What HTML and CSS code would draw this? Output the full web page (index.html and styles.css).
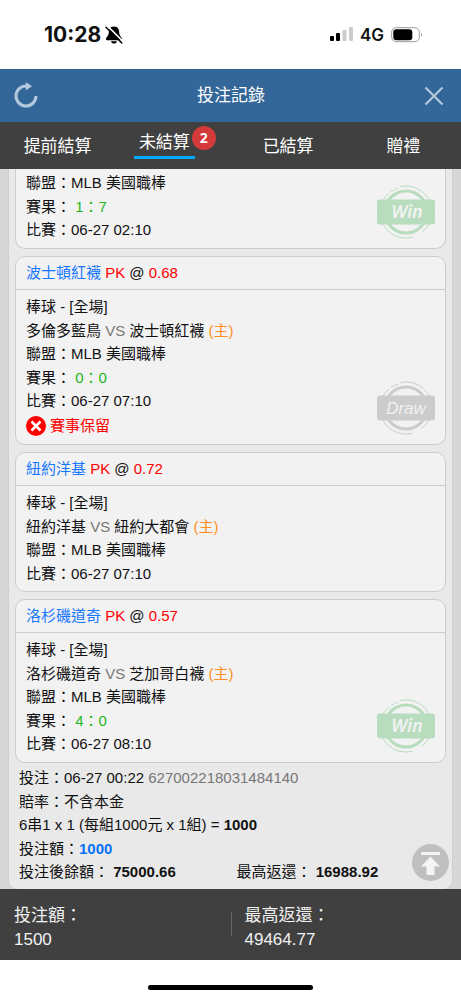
FILE: index.html
```html
<!DOCTYPE html>
<html lang="zh-Hant">
<head>
<meta charset="utf-8">
<meta name="viewport" content="width=device-width, initial-scale=1">
<title>投注記錄</title>
<link rel="stylesheet" href="styles.css">
</head>
<body>
<svg class="sprite" aria-hidden="true">
  <symbol id="ring" viewBox="0 0 60 54">
    <g fill="none" stroke="currentColor">
      <circle cx="30" cy="27" r="21" stroke-width="3"/>
      <path d="M24 1.7A26 26 0 0 1 54.500 18M18.500 4.500L22 3M15 6.500L18 4.800M13 8A26 26 0 0 0 5.500 18M5.500 36A26 26 0 0 0 36.500 52.200M45.500 47.500A26 26 0 0 0 54.500 36"/>
    </g>
    <rect x="1" y="14.500" width="58" height="25" rx="3" fill="currentColor"/>
  </symbol>
</svg>

<div class="status">
  <div class="status-side">
    <span class="clock">10:28</span>
    <svg width="18" height="18" viewBox="0 0 18 18" aria-hidden="true">
      <path d="M9 .5C5 .5 3.800 3.500 3.800 6.500C3.800 9.500 1.700 11 1 12.500C.8 13.500 1.300 14.300 2 14.300H16C16.700 14.300 17.200 13.500 17 12.500C16.300 11 14.200 9.500 14.200 6.500C14.200 3.500 13 .5 9 .5ZM6 15.200H12C11.500 18.300 6.500 18.300 6 15.200Z"/>
      <path d="M2.500 0L18.500 16" stroke="#fff" stroke-width="1.600"/>
      <path d="M1 1.200L16.800 17" stroke="#000" stroke-width="1.500" stroke-linecap="round"/>
    </svg>
  </div>
  <div class="status-side">
    <svg width="23" height="15" viewBox="0 0 23 15" aria-hidden="true">
      <rect y="9" width="4" height="5" rx="1"/><rect x="6" y="6" width="4" height="8" rx="1"/>
      <g fill="#ccc"><rect x="12.500" y="3" width="4" height="11" rx="1"/><rect x="19" width="4" height="14" rx="1"/></g>
    </svg>
    <span class="network">4G</span>
    <svg width="32" height="16" viewBox="0 0 32 16" aria-hidden="true">
      <rect x=".7" y=".7" width="27.600" height="14" rx="4.500" fill="none" stroke="#999"/>
      <rect x="2.300" y="2.300" width="19" height="11" rx="3"/>
      <path d="M30 5.500Q32 7.700 30 10Z" fill="#999"/>
    </svg>
  </div>
</div>

<header class="titlebar">
  <button class="icon-button" type="button" aria-label="重新整理">
    <svg width="24" height="28" viewBox="0 0 24 28"><path d="M22 14A10 10 0 1 1 12 4H14" fill="none" stroke="currentColor" stroke-width="3"/><path d="M11.800 0L18 4.300L11.800 8.600Z" fill="currentColor"/></svg>
  </button>
  <h1 class="title">投注記錄</h1>
  <button class="icon-button" type="button" aria-label="關閉">
    <svg width="20" height="20" viewBox="0 0 20 20"><path d="M1.500 1.500L18.500 18.500M18.500 1.500L1.500 18.500" fill="none" stroke="currentColor" stroke-width="2.200"/></svg>
  </button>
</header>

<nav class="tabs">
  <button class="tab" type="button">提前結算</button>
  <button class="tab tab-active" type="button"><span class="tab-label">未結算</span><span class="badge">2</span></button>
  <button class="tab" type="button">已結算</button>
  <button class="tab" type="button">贈禮</button>
</nav>

<main class="records">
  <div class="panel">
    <article class="card card-continued">
      <div class="card-body">
        <p class="row">聯盟：MLB 美國職棒</p>
        <p class="row">賽果： <span class="score">1：7</span></p>
        <p class="row">比賽：06-27 02:10</p>
      </div>
      <svg class="stamp stamp-win" viewBox="0 0 60 54"><use href="#ring"/><text class="stamp-win-text" x="31" y="33">Win</text></svg>
    </article>

    <article class="card">
      <h2 class="card-head"><span class="pick">波士頓紅襪</span> <span class="odds">PK</span> @ <span class="odds">0.68</span></h2>
      <div class="card-body">
        <p class="row">棒球 - [全場]</p>
        <p class="row">多倫多藍鳥 <span class="versus">VS</span> 波士頓紅襪 <span class="host">(主)</span></p>
        <p class="row">聯盟：MLB 美國職棒</p>
        <p class="row">賽果： <span class="score">0：0</span></p>
        <p class="row">比賽：06-27 07:10</p>
        <p class="notice">
          <svg width="20" height="20" viewBox="0 0 20 20" aria-hidden="true"><circle cx="10" cy="10" r="10" fill="currentColor"/><path d="M5.500 5.500L14.500 14.500M14.500 5.500L5.500 14.500" stroke="#fff" stroke-width="2.600"/></svg>
          賽事保留
        </p>
      </div>
      <svg class="stamp stamp-draw" viewBox="0 0 60 54"><use href="#ring"/><text class="stamp-draw-text" x="30" y="33">Draw</text></svg>
    </article>

    <article class="card">
      <h2 class="card-head"><span class="pick">紐約洋基</span> <span class="odds">PK</span> @ <span class="odds">0.72</span></h2>
      <div class="card-body">
        <p class="row">棒球 - [全場]</p>
        <p class="row">紐約洋基 <span class="versus">VS</span> 紐約大都會 <span class="host">(主)</span></p>
        <p class="row">聯盟：MLB 美國職棒</p>
        <p class="row">比賽：06-27 07:10</p>
      </div>
    </article>

    <article class="card">
      <h2 class="card-head"><span class="pick">洛杉磯道奇</span> <span class="odds">PK</span> @ <span class="odds">0.57</span></h2>
      <div class="card-body">
        <p class="row">棒球 - [全場]</p>
        <p class="row">洛杉磯道奇 <span class="versus">VS</span> 芝加哥白襪 <span class="host">(主)</span></p>
        <p class="row">聯盟：MLB 美國職棒</p>
        <p class="row">賽果： <span class="score">4：0</span></p>
        <p class="row">比賽：06-27 08:10</p>
      </div>
      <svg class="stamp stamp-win" viewBox="0 0 60 54"><use href="#ring"/><text class="stamp-win-text" x="31" y="33">Win</text></svg>
    </article>

    <section class="summary">
      <p class="row">投注：06-27 00:22 <span class="ticket">627002218031484140</span></p>
      <p class="row">賠率：不含本金</p>
      <p class="row">6串1 x 1 (每組1000元 x 1組) = <b>1000</b></p>
      <p class="row">投注額：<b class="stake">1000</b></p>
      <p class="row row-split"><span>投注後餘額： <b>75000.66</b></span><span>最高返還： <b>16988.92</b></span></p>
    </section>
  </div>
  <button class="to-top" type="button" aria-label="回到頂部">
    <svg width="37" height="37" viewBox="0 0 37 37"><circle cx="18.500" cy="18.500" r="18.500" fill="#bfbfbf"/><rect x="9" y="8" width="19" height="3" rx="1" fill="#f5f5f5"/><path d="M18.500 12.500L28 22.500H22.500V31H14.500V22.500H9Z" fill="#f5f5f5"/></svg>
  </button>
</main>

<footer class="totals">
  <div class="total"><span>投注額：</span><span>1500</span></div>
  <div class="total"><span>最高返還：</span><span>49464.77</span></div>
</footer>
<div class="home"><span class="home-bar"></span></div>
</body>
</html>
```
FILE: styles.css
```css
* { box-sizing: border-box; }

body {
  margin: 0;
  height: 100vh;
  display: flex;
  flex-direction: column;
  background: #fff;
  color: #111;
  font: 15px/24px "Liberation Sans", "Noto Sans CJK TC", sans-serif;
}

h1, h2, p { margin: 0; font-weight: 400; }

button {
  border: 0;
  padding: 0;
  background: none;
  color: inherit;
  font: inherit;
}

svg { display: block; flex: none; }

.sprite { position: absolute; width: 0; height: 0; }

.status {
  flex: none;
  height: 69px;
  padding: 0 38px 0 44px;
  display: flex;
  justify-content: space-between;
  align-items: center;
}

.status-side { display: flex; align-items: center; gap: 7px; }
.status-side:first-child { gap: 4px; }
.clock { font: 700 21px/24px Inter, sans-serif; }
.network { font: 600 17px/24px Inter, sans-serif; }

.titlebar {
  flex: none;
  height: 53px;
  padding: 0 17px 0 14px;
  display: flex;
  align-items: center;
  justify-content: space-between;
  background: #369;
  color: #fff;
}

.title { font-size: 17px; line-height: 24px; }
.icon-button { color: #b4c8dc; }

.tabs {
  flex: none;
  height: 47px;
  display: grid;
  grid-template-columns: repeat(4, 1fr);
  background: #404040;
  color: #fff;
  font-size: 17px;
}

.tab { display: flex; align-items: center; justify-content: center; padding-top: 2px; }
.tab-active { align-items: flex-start; padding: 4px 0 0 4px; }

.tab-label {
  margin-top: 5px;
  padding: 0 5px 1px;
  border-bottom: 3px solid #0af;
}

.badge {
  width: 24px;
  height: 24px;
  margin-left: -3px;
  border-radius: 50%;
  background: #d43a3a;
  font: 700 14px/24px "Noto Sans", sans-serif;
}

.records {
  position: relative;
  flex: 1;
  min-height: 0;
  overflow: hidden;
  display: flex;
  flex-direction: column;
  justify-content: flex-end;
  background: #d7d7d7;
}

.panel {
  flex: 1 0 auto;
  margin: 0 9px;
  padding: 0 6px 5px;
  display: flex;
  flex-direction: column;
  justify-content: flex-end;
  gap: 7px;
  border-radius: 0 0 8px 8px;
  background: #e9e9e9;
  box-shadow: 0 0 2px #bbb;
}

.card {
  position: relative;
  border: 1px solid #ccc;
  border-radius: 10px;
  background: #f2f2f2;
}

.card-continued { border-top: 0; border-radius: 0 0 10px 10px; }

.card-head {
  padding: 0 10px;
  border-bottom: 1px solid #ccc;
  font-size: 15px;
  line-height: 32px;
}

.card-body { padding: 5px 10px 6px; }

.row { line-height: 24px; height: 24px; }
.row:nth-child(even) { line-height: 23px; height: 23px; }

.row-split { display: grid; grid-template-columns: 1fr 1fr; gap: 8px; }

.pick { color: #1777ff; }
.odds { color: #f00; }
.versus, .ticket { color: #777; }
.host { color: #ff9020; }
.score { color: #1db91d; }
.stake { color: #0a73f5; }

.notice {
  height: 25px;
  display: flex;
  align-items: center;
  gap: 4px;
  color: #f00;
}

.stamp {
  position: absolute;
  right: 9px;
  bottom: 9px;
  width: 60px;
  height: 54px;
}

.stamp text { fill: #f2f2f2; text-anchor: middle; }
.stamp-win { color: #b8ddbe; }
.stamp-draw { color: #ccc; }
.stamp-win-text { font: italic 600 18px "Noto Sans", sans-serif; }
.stamp-draw-text { font: italic 400 17px "Liberation Sans", sans-serif; }

.summary { margin-top: -4px; padding-left: 4px; }

.to-top { position: absolute; right: 12px; bottom: 8px; }

.totals {
  flex: none;
  padding: 15px 0 8px;
  display: grid;
  grid-template-columns: 1fr 1fr;
  align-items: center;
  background: #404040;
  color: #f2f2f2;
  font-size: 17px;
}

.total {
  position: relative;
  display: flex;
  flex-direction: column;
  padding-left: 14px;
}

.total + .total::before {
  content: "";
  position: absolute;
  left: 0;
  top: 8px;
  width: 1px;
  height: 24px;
  background: #666;
}

.home {
  flex: none;
  height: 40px;
  padding-top: 25px;
  display: flex;
  justify-content: center;
}

.home-bar { width: 36%; height: 5px; border-radius: 3px; background: #000; }
```
